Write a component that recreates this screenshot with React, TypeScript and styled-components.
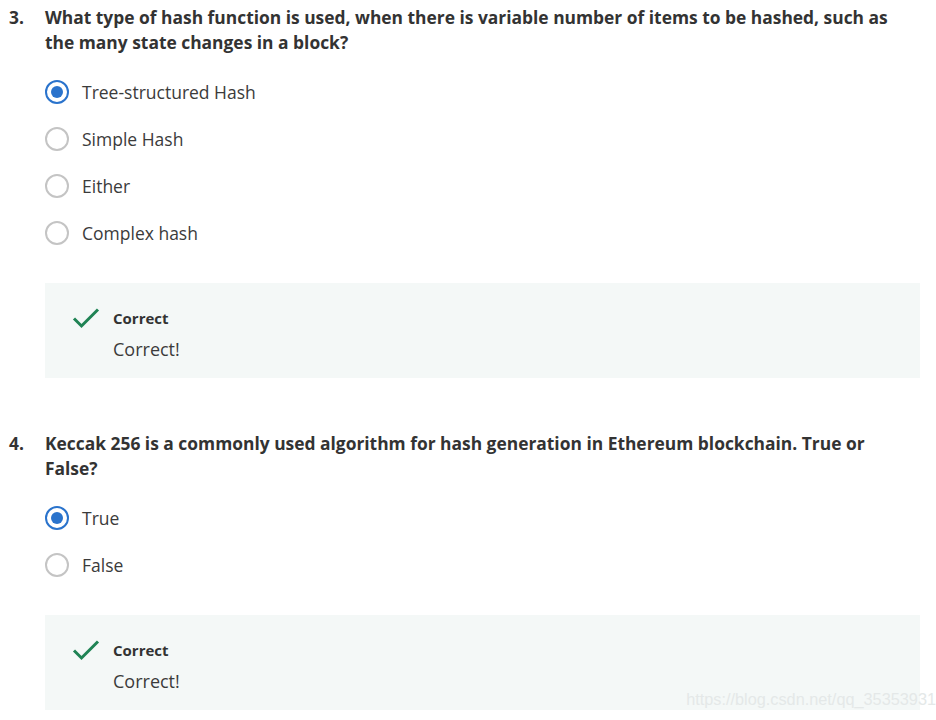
import { createGlobalStyle, styled } from "styled-components";

const GlobalStyle = createGlobalStyle`
  body {
    margin: 0;
    background: #fff;
    font-family: "Open Sans", "Noto Sans", sans-serif;
    color: #333;
  }
`;

type TOption = { label: string; checked?: boolean };
type TQuestion = { number: number; text: string; options: TOption[] };

const questions: TQuestion[] = [
  {
    number: 3,
    text: "What type of hash function is used, when there is variable number of items to be hashed, such as the many state changes in a block?",
    options: [
      { label: "Tree-structured Hash", checked: true },
      { label: "Simple Hash" },
      { label: "Either" },
      { label: "Complex hash" },
    ],
  },
  {
    number: 4,
    text: "Keccak 256 is a commonly used algorithm for hash generation in Ethereum blockchain. True or False?",
    options: [{ label: "True", checked: true }, { label: "False" }],
  },
];

const Page = styled.main`
  width: 936px;
  height: 720px;
  overflow: hidden;
  position: relative;
  padding-top: 5px;
  box-sizing: border-box;
`;

const QuestionBlock = styled.section`
  display: grid;
  grid-template-columns: 36px 875px;
  padding-left: 9px;
  margin-bottom: 53px;
`;

const Number = styled.div`
  font-weight: 700;
  font-size: 17.4px;
  line-height: 24.5px;
`;

const Prompt = styled.h3`
  margin: 0;
  font-weight: 700;
  font-size: 17.4px;
  line-height: 24.5px;
`;

const Options = styled.ul`
  grid-column: 2;
  list-style: none;
  margin: 26px 0 0;
  padding: 0;
  display: flex;
  flex-direction: column;
  gap: 23px;
`;

const OptionRow = styled.li`
  display: flex;
  align-items: center;
  gap: 13px;
  height: 24px;
  font-size: 17.5px;
  color: #3b3b3b;
`;

const Radio = styled.span<{ $checked?: boolean }>`
  width: 24px;
  height: 24px;
  border-radius: 50%;
  box-sizing: border-box;
  border: 2.5px solid ${({ $checked }) => ($checked ? "#2a73cc" : "#c4c4c4")};
  display: flex;
  align-items: center;
  justify-content: center;
  flex-shrink: 0;
  &::after {
    content: "";
    width: 12px;
    height: 12px;
    border-radius: 50%;
    background: #2a73cc;
    display: ${({ $checked }) => ($checked ? "block" : "none")};
  }
`;

const Feedback = styled.div`
  grid-column: 2;
  margin-top: 38px;
  height: 95px;
  box-sizing: border-box;
  background: #f4f8f7;
  padding: 24px 0 0 27px;
  display: flex;
  gap: 13px;
`;

const FeedbackText = styled.div`
  display: flex;
  flex-direction: column;
`;

const FeedbackTitle = styled.div`
  font-size: 15px;
  font-weight: 700;
  line-height: 22px;
  color: #333;
`;

const FeedbackBody = styled.div`
  font-size: 18px;
  line-height: 26px;
  margin-top: 7px;
  color: #3b3b3b;
`;

const Watermark = styled.div`
  position: absolute;
  right: 0;
  bottom: 11px;
  font-family: "Liberation Sans", Arial, sans-serif;
  font-size: 16.3px;
  color: #e4e8e8;
`;

const Check = () => (
  <svg width="28" height="24" viewBox="0 0 28 24" style={{ marginTop: -1 }}>
    <path d="M2 12.5 L9.5 20 L26 3.5" fill="none" stroke="#1f8354" strokeWidth="3" />
  </svg>
);

export default function App() {
  return (
    <Page>
      <GlobalStyle />
      {questions.map((q) => (
        <QuestionBlock key={q.number}>
          <Number>{q.number}.</Number>
          <Prompt>{q.text}</Prompt>
          <Options>
            {q.options.map((o) => (
              <OptionRow key={o.label}>
                <Radio $checked={o.checked} />
                {o.label}
              </OptionRow>
            ))}
          </Options>
          <Feedback>
            <Check />
            <FeedbackText>
              <FeedbackTitle>Correct</FeedbackTitle>
              <FeedbackBody>Correct!</FeedbackBody>
            </FeedbackText>
          </Feedback>
        </QuestionBlock>
      ))}
      <Watermark>https://blog.csdn.net/qq_35353931</Watermark>
    </Page>
  );
}
